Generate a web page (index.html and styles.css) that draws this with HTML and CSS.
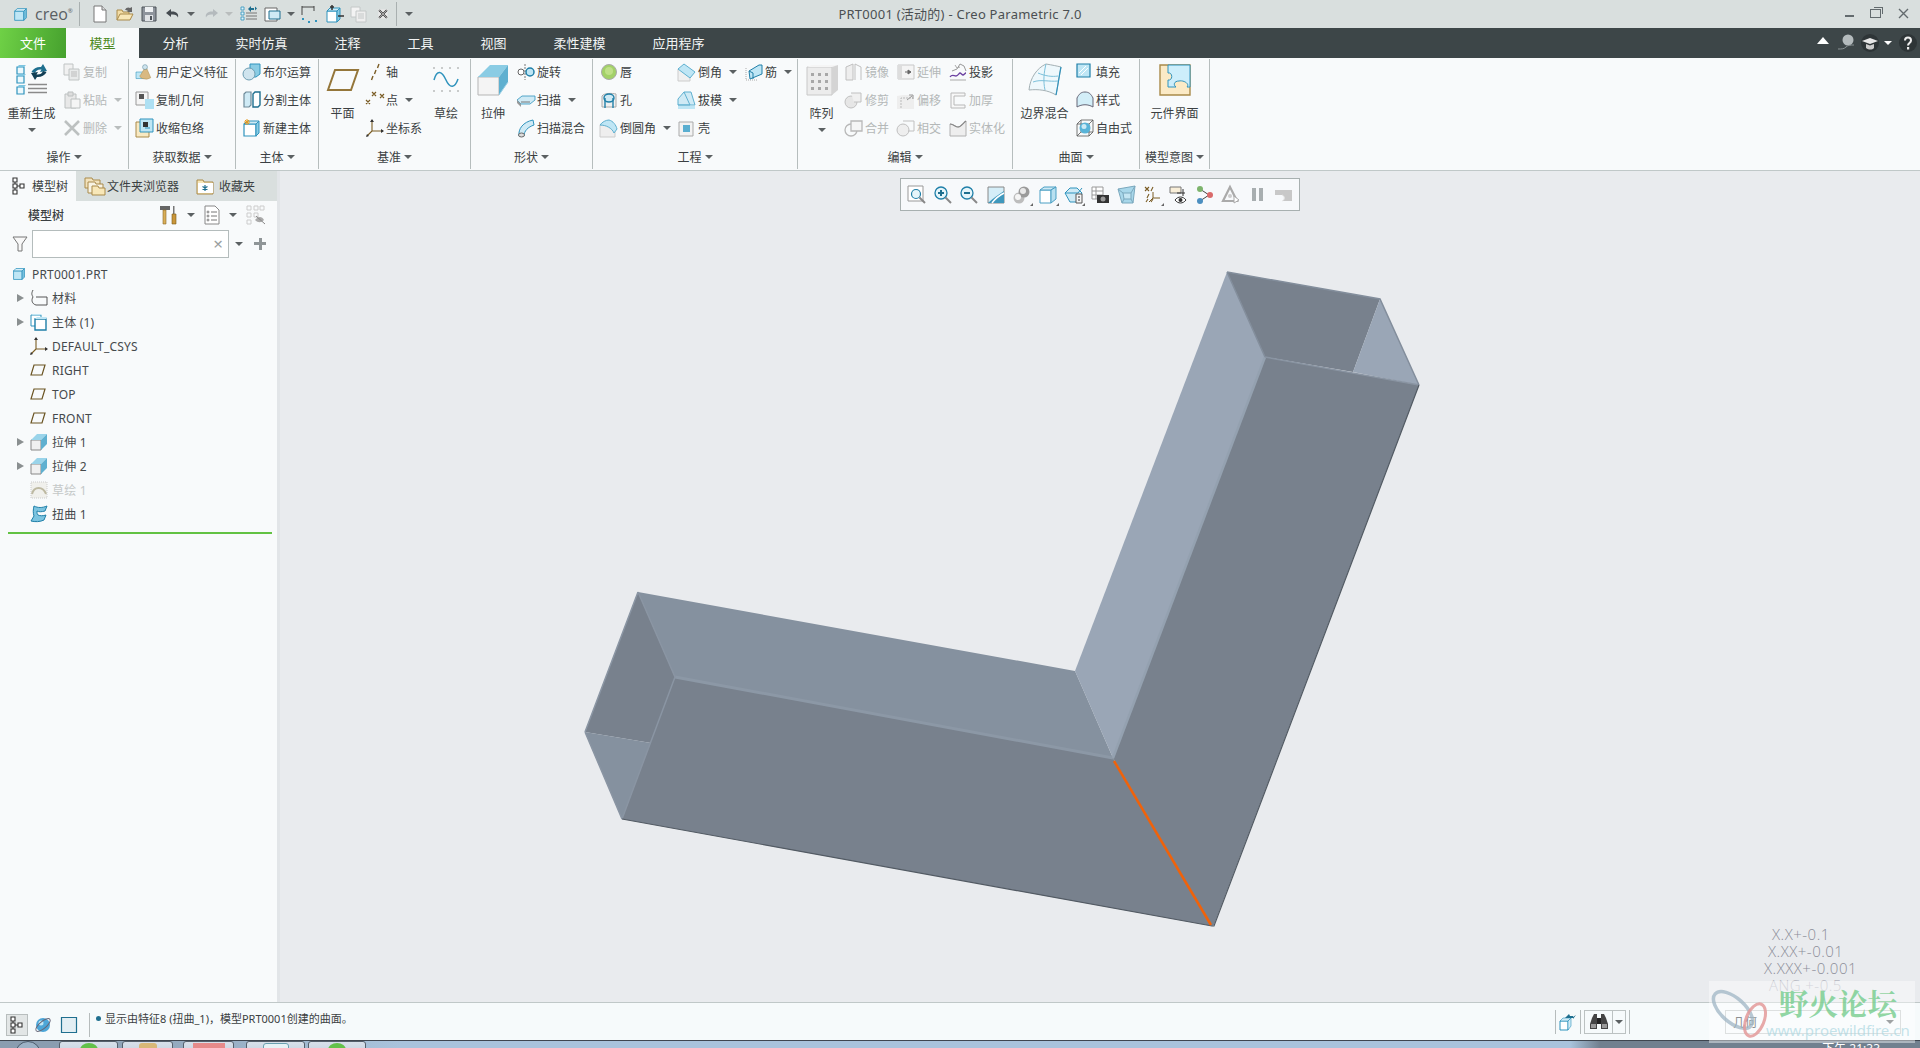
FILE: index.html
```html
<!DOCTYPE html>
<html lang="zh">
<head>
<meta charset="utf-8">
<title>PRT0001 (活动的) - Creo Parametric 7.0</title>
<link rel="stylesheet" href="styles.css">
</head>
<body>
<svg class="sprite" xmlns="http://www.w3.org/2000/svg">
<defs>
<symbol id="cube" viewBox="0 0 18 18"><path d="M2 5h11v11H2z" fill="#bfe6f5" stroke="#2f93bd"/><path d="M2 5l3-3h11l-3 3z" fill="#dff3fb" stroke="#2f93bd"/><path d="M13 5l3-3v11l-3 3z" fill="#7cc4e0" stroke="#2f93bd"/></symbol>
<symbol id="new" viewBox="0 0 18 18"><path d="M3 1h8l4 4v12H3z" fill="#fff" stroke="#777"/><path d="M11 1v4h4" fill="#ddd" stroke="#777"/></symbol>
<symbol id="open" viewBox="0 0 18 18"><path d="M1 15V5h5l1 2h6v3" fill="#f3dda6" stroke="#a98a4a"/><path d="M1 15l3-6h13l-3 6z" fill="#f8e7b8" stroke="#a98a4a"/><path d="M9 5c1-3 4-3 5-2l2-1v5h-5l1-1c-1-1-2-1-3-1z" fill="#666"/></symbol>
<symbol id="save" viewBox="0 0 18 18"><path d="M2 2h14v14H2z" fill="#8e949c" stroke="#4d5359"/><path d="M5 2h8v5H5z" fill="#eef1f3"/><path d="M5 10h8v6H5z" fill="#e0e3e6"/><path d="M10 11h2v4h-2z" fill="#4d5359"/></symbol>
<symbol id="undo" viewBox="0 0 18 18"><path d="M7 4L2 8l5 4V9.500c4-.5 6 .5 7 3 1-4-2-6.500-7-6z" fill="#454b50"/></symbol>
<symbol id="redo" viewBox="0 0 18 18"><path d="M11 4l5 4-5 4V9.500c-4-.5-6 .5-7 3-1-4 2-6.500 7-6z" fill="#b4babd"/></symbol>
<symbol id="regen-s" viewBox="0 0 18 18"><path d="M1 2h3v3H1zM1 7h3v3H1zM1 12h3v3H1z" fill="#dff3fb" stroke="#2f93bd" stroke-width=".8"/><path d="M6 8h11M6 11h11M6 14h11" stroke="#777"/><path d="M8 4l3-3v2h3v2h-3v2zM17 3.500l-2 2v-4z" fill="#1f6f8f"/></symbol>
<symbol id="window" viewBox="0 0 18 18"><path d="M1 3h12v13H1z" fill="#fff" stroke="#666"/><path d="M5 6h11v8H5z" fill="#cfeaf5" stroke="#1f6f8f"/></symbol>
<symbol id="dim" viewBox="0 0 18 18"><path d="M2 2h12M2 1v9M14 1v5" stroke="#444" fill="none"/><path d="M2 13h2v2H2zM8 16h2v2H8zM15 15h2v2h-2z" fill="#2f93bd"/></symbol>
<symbol id="addcube" viewBox="0 0 18 18"><path d="M1 6h10v11H1z" fill="#fff" stroke="#2f93bd"/><path d="M1 6l3-3h10l-3 3z" fill="#cfeaf5" stroke="#2f93bd"/><path d="M11 6l3-3v11l-3 3z" fill="#8accE4" stroke="#2f93bd"/><path d="M6 0v5M4 2h4M12 11h6" stroke="#333" stroke-width="1.500"/></symbol>
<symbol id="copy-g" viewBox="0 0 18 18"><path d="M1 2h9v10H1z" fill="#f3f3f3" stroke="#c4c8c8"/><path d="M6 6h10v11H6z" fill="#eee" stroke="#c4c8c8"/><path d="M8 9h6M8 11h6M8 13h6" stroke="#c4c8c8"/></symbol>
<symbol id="x-b" viewBox="0 0 18 18"><path d="M3 3h12v12H3z" fill="#e8e8e8"/><path d="M4 4l10 10M14 4L4 14" stroke="#333" stroke-width="2.500"/><path d="M4 4l10 10M14 4L4 14" stroke="#eee" stroke-width=".8"/></symbol>
<symbol id="regen" viewBox="0 0 32 32"><g fill="#edf8fc" stroke="#2f93bd" stroke-width="1.200"><path d="M1 3h7v7H1zM1 12h7v7H1zM1 23h7v7H1z"/></g><g fill="#7cc4e0"><path d="M1 3l2-2h7l-2 2zM1 12l2-2h7l-2 2zM1 23l2-2h7l-2 2z"/></g><path d="M12 20.500h19M12 24.500h19M12 28.500h19" stroke="#8a8a8a" stroke-width="1.500"/><path d="M15.500 8A9 7 0 0 1 25 3l2-3 4 7-7 1 1.500-2.500A6 5 0 0 0 19 9z" fill="#1f6f8f"/><path d="M30.500 8A9 7 0 0 1 21 13l-2 3-4-7 7-1-1.500 2.500A6 5 0 0 0 27 7z" fill="#123f55"/></symbol>
<symbol id="copy" viewBox="0 0 18 18"><path d="M1 1h9v11H1z" fill="#f1f1f1" stroke="#c0c4c4"/><path d="M6 6h10v11H6z" fill="#e8eaea" stroke="#c0c4c4"/><path d="M8 9h6M8 11h6M8 13h6" stroke="#bbb"/></symbol>
<symbol id="paste" viewBox="0 0 18 18"><path d="M2 3h11v14H2z" fill="#e8e8e8" stroke="#bcc0c0"/><path d="M5 1h5v4H5z" fill="#ddd" stroke="#bcc0c0"/><path d="M8 8h9v9H8z" fill="#f5f5f5" stroke="#bcc0c0"/></symbol>
<symbol id="del" viewBox="0 0 18 18"><path d="M2 2l14 14M16 2L2 16" stroke="#bcc0c0" stroke-width="2.600"/></symbol>
<symbol id="udf" viewBox="0 0 22 18"><path d="M0 9h11v8H0z" fill="#bfe6f5" stroke="#2f93bd" stroke-width=".7"/><path d="M6 12l6-10 6 14a6 3 0 0 1-12-4z" fill="#d9b982" stroke="#a98a4a" stroke-width=".6"/><circle cx="11" cy="3" r="3" fill="#cfe4ee" stroke="#4c7f96" stroke-width=".6"/></symbol>
<symbol id="copygeom" viewBox="0 0 18 18"><path d="M0 1h12v13H0z" fill="#f5f5f5" stroke="#999"/><path d="M3 3h5v5H3z" fill="#555"/><path d="M9 8h9v10H9z" fill="#aee0f3"/></symbol>
<symbol id="shrink" viewBox="0 0 18 18"><path d="M0 3h13v15H0z" fill="#f8e9c2" stroke="#a98a4a"/><path d="M4 0h13v13H4z" fill="#bfe6f5" stroke="#2f93bd"/><path d="M7 3h5v5H7z" fill="#333"/><path d="M9 9h5" stroke="#2f93bd"/></symbol>
<symbol id="bool" viewBox="0 0 18 18"><path d="M7 1l3-0h7v10l-4 3H7z" fill="#8accE4" stroke="#2f93bd"/><circle cx="6" cy="11" r="6" fill="#cfe4ee" stroke="#6e9db2"/></symbol>
<symbol id="split" viewBox="0 0 18 18"><path d="M1 3l2-2h5v13l-2 2H1z" fill="#cfeaf5" stroke="#6e8a99" stroke-width="1.200"/><path d="M10 3l2-2h5v13l-2 2h-5z" fill="#fff" stroke="#1f6f8f" stroke-width="1.400"/></symbol>
<symbol id="newbody" viewBox="0 0 18 18"><path d="M1 5h12v12H1z" fill="#fff" stroke="#2f93bd" stroke-width="1.200"/><path d="M13 5l3-3v12l-3 3z" fill="#8accE4" stroke="#2f93bd"/><path d="M1 5l3-3h12l-3 3z" fill="#cfeaf5" stroke="#2f93bd"/><path d="M4 0v6M1 3h6M2 1l4 4M6 1L2 5" stroke="#e89a1c"/></symbol>
<symbol id="plane" viewBox="0 0 32 24"><path d="M8 2h23l-7 20H1z" fill="none" stroke="#94763a" stroke-width="2"/></symbol>
<symbol id="axis" viewBox="0 0 18 18"><path d="M13 1l-1.500 4M10 7l-1.500 4M7 13l-1.500 4" stroke="#7a5c24" stroke-width="1.400"/></symbol>
<symbol id="point" viewBox="0 0 18 18"><path d="M6 1l4 4M10 1L6 5M14 3l4 4M18 3l-4 4M0 9l4 4M4 9l-4 4" stroke="#7a5c24" stroke-width="1.200"/></symbol>
<symbol id="csys" viewBox="0 0 18 18"><path d="M6 1v11h11M6 12l-5 5" fill="none" stroke="#7a5c24" stroke-width="1.100"/><path d="M6 0l2 3H4zM18 12l-3-2v4zM0 18l1-3 2 2z" fill="#333"/></symbol>
<symbol id="sketch" viewBox="0 0 32 32"><g transform="translate(3 3)"><path d="M1 13c3-11 8-9 12 0s9 8 12-1" fill="none" stroke="#2f93bd" stroke-width="1.500"/><g fill="#777"><circle cx="1" cy="1" r=".7"/><circle cx="9" cy="1" r=".7"/><circle cx="17" cy="1" r=".7"/><circle cx="25" cy="1" r=".7"/><circle cx="1" cy="24" r=".7"/><circle cx="9" cy="24" r=".7"/><circle cx="17" cy="24" r=".7"/><circle cx="25" cy="24" r=".7"/></g></g></symbol>
<symbol id="extrude" viewBox="0 0 32 32"><path d="M1 13h21v18H1z" fill="#f4f4f4" stroke="#b5b5b5"/><path d="M1 13L13 1h18L22 13z" fill="#8accE4"/><path d="M22 13L31 1v17l-9 13z" fill="#5fb0d0"/><path d="M22 31l9-13" stroke="#9ad0e6"/></symbol>
<symbol id="revolve" viewBox="0 0 18 18"><path d="M8 1v16" stroke="#777" stroke-dasharray="2 1"/><circle cx="4" cy="9" r="3" fill="#fff" stroke="#666"/><circle cx="13" cy="9" r="4" fill="#bfe6f5" stroke="#1f7fa8" stroke-width="1.500"/></symbol>
<symbol id="sweep" viewBox="0 0 18 18"><path d="M0 9l5-4h13v4l-5 4H4z" fill="#cfeaf5" stroke="#2f93bd" stroke-width=".8"/><path d="M0 9l4 4v3L0 12z" fill="#999"/><path d="M4 11h9" stroke="#777"/></symbol>
<symbol id="sblend" viewBox="0 0 18 18"><path d="M2 17C1 10 6 3 16 1l1 5C11 8 7 12 7 17z" fill="#cfeaf5" stroke="#2f93bd"/><ellipse cx="4.500" cy="16" rx="3" ry="2" fill="#ddd" stroke="#666"/></symbol>
<symbol id="lip" viewBox="0 0 18 18"><circle cx="9" cy="9" r="7.500" fill="#a3d168" stroke="#aaa"/><circle cx="9" cy="8" r="4" fill="#bfe088"/></symbol>
<symbol id="hole" viewBox="0 0 18 18"><path d="M2 5c2-3 10-3 14-2v13H2z" fill="#f0f0f0" stroke="#aaa"/><ellipse cx="9" cy="7" rx="5" ry="4" fill="#cfeaf5" stroke="#1f7fa8" stroke-width="1.400"/><path d="M5 7v10M13 7v10" stroke="#1f7fa8" stroke-width="1.400"/></symbol>
<symbol id="round" viewBox="0 0 18 18"><path d="M0 6h7c3 0 6 2 8 6v6H0z" fill="#eee" stroke="#ccc"/><path d="M0 6c2-3 6-5 9-5 4 1 7 5 8 9l-3 4C12 9 6 6 0 6z" fill="#bfe6f5" stroke="#5fb0d0"/></symbol>
<symbol id="chamfer" viewBox="0 0 18 18"><path d="M0 6h12v12H0z" fill="#f0f0f0" stroke="#ccc"/><path d="M0 6l6-5 11 8-5 6z" fill="#bfe6f5" stroke="#5fb0d0"/></symbol>
<symbol id="draft" viewBox="0 0 18 18"><path d="M0 8l6-7 7 0 4 13H0z" fill="#cfeaf5" stroke="#5fb0d0"/><path d="M6 1l6 13H0" fill="none" stroke="#5fb0d0"/><path d="M0 15h17v3H0z" fill="#bfe6f5"/></symbol>
<symbol id="shell" viewBox="0 0 18 18"><path d="M1 3h14v14H1z" fill="#f2f2f2" stroke="#aaa"/><path d="M5 6h7v7H5z" fill="#5aaed0"/></symbol>
<symbol id="rib" viewBox="0 0 18 18"><path d="M1 5l0 12 12 0" stroke="#aaa" stroke-dasharray="1 1" fill="none"/><path d="M4 8l10-6 3 0v9L5 16z" fill="#bfe6f5" stroke="#1f7fa8"/><path d="M4 8l4 2v6" stroke="#1f7fa8" fill="none"/></symbol>
<symbol id="pattern" viewBox="0 0 32 32"><path d="M1 3h25v28H1z" fill="#ececec" stroke="#c8c8c8"/><path d="M1 3l5-2h26l-6 2z" fill="#f5f5f5"/><path d="M26 3l6-2v25l-6 5z" fill="#d4d4d4"/><g fill="#a8a8a8"><path d="M5 9h3v3H5zM12 9h3v3h-3zM19 9h3v3h-3zM5 16h3v3H5zM12 16h3v3h-3zM19 16h3v3h-3zM5 23h3v3H5zM12 23h3v3h-3zM19 23h3v3h-3z"/></g></symbol>
<symbol id="mirror" viewBox="0 0 18 18"><path d="M1 4l7-3v16H1z" fill="#eee" stroke="#c0c0c0"/><path d="M10 17V1l6 3v13" fill="none" stroke="#c0c0c0"/></symbol>
<symbol id="trim" viewBox="0 0 18 18"><circle cx="6" cy="11" r="6" fill="#e6e6e6" stroke="#c0c0c0"/><path d="M6 2h10v9H9" fill="#f0f0f0" stroke="#c0c0c0"/></symbol>
<symbol id="merge" viewBox="0 0 18 18"><circle cx="6" cy="11" r="6" fill="none" stroke="#b8b8b8" stroke-width="1.300"/><path d="M6 2h11v10H6z" fill="#f5f5f5" stroke="#b8b8b8" stroke-width="1.300"/></symbol>
<symbol id="extend" viewBox="0 0 18 18"><path d="M1 2h16v14H1z" fill="#f4f4f4" stroke="#c8c8c8"/><path d="M1 2h4v14H1z" fill="#ddd"/><path d="M8 9h5M11 7l3 2-3 2z" stroke="#666" fill="#666"/></symbol>
<symbol id="offset" viewBox="0 0 18 18"><path d="M0 5l6-1h11v14H0z" fill="#eee"/><path d="M4 17V7h12" fill="none" stroke="#bbb" stroke-dasharray="2 1"/><path d="M10 9l5-4M12 4h4v4" stroke="#999" fill="none"/></symbol>
<symbol id="intersect" viewBox="0 0 18 18"><circle cx="6" cy="11" r="6" fill="#eee" stroke="#c0c0c0"/><path d="M6 2h11v10H11" fill="none" stroke="#c0c0c0"/></symbol>
<symbol id="project" viewBox="0 0 18 18"><path d="M1 14c2-3 4-1 6-1s3-3 4-3 2 2 3 2 2-2 3-2" fill="none" stroke="#6a3fa0" stroke-width="1.300"/><path d="M3 8l5-2 3-5 4 2 2 5" fill="none" stroke="#999"/><path d="M6 2l2 3 3-1M1 17h16" stroke="#aaa" fill="none"/></symbol>
<symbol id="thicken" viewBox="0 0 18 18"><path d="M2 2h14v3H5v9h11v3H2z" fill="#f8f8f8" stroke="#b8b8b8"/></symbol>
<symbol id="solidify" viewBox="0 0 18 18"><path d="M1 5c4 0 5 3 8 3s5-4 8-6v15H1z" fill="#eee" stroke="#b0b0b0"/><path d="M1 5c4 0 5 3 8 3s5-4 8-6" fill="none" stroke="#888" stroke-width="1.200"/></symbol>
<symbol id="boundary" viewBox="0 0 32 32"><path d="M0 26C1 14 8 4 17 0c6 1 11 2 15 3-2 9-3 19-5 28C19 26 9 25 0 26z" fill="#eef8fc" stroke="#a4b0b4"/><path d="M9 9c7 3 14 4 20 3M4 18c8-3 16 0 25-1" fill="none" stroke="#7cc0da"/><path d="M17 0c-2 8-3 17-1 26" fill="none" stroke="#7cc0da"/><path d="M32 3c-2 9-3 19-5 28" stroke="#2f93bd" fill="none" stroke-width="1.200"/></symbol>
<symbol id="fill" viewBox="0 0 18 18"><path d="M1 1h13v13H1z" fill="#bfe6f5" stroke="#1f7fa8" stroke-width="1.200"/><path d="M3 10l7-7M5 12l7-7" stroke="#fff"/></symbol>
<symbol id="style" viewBox="0 0 18 18"><path d="M1 16V7c2-4 4-6 8-6s6 2 8 6v9c-5-3-11-3-16 0z" fill="#d3eef8" stroke="#667"/></symbol>
<symbol id="freestyle" viewBox="0 0 18 18"><path d="M1 5h12v12H1zM5 1h12v12H5zM1 5l4-4M13 5l4-4M1 17l4-4M13 17l4-4" fill="none" stroke="#555" stroke-width=".8"/><circle cx="9" cy="9" r="5.500" fill="#59b4d8"/><circle cx="8" cy="7.500" r="2.500" fill="#cdeaf5"/></symbol>
<symbol id="iface" viewBox="0 0 32 32"><path d="M1 1h30v30H1z" fill="#fbeac6" stroke="#a98a4a" stroke-width="1.400"/><path d="M9 1h22v22h-3c3-3-3-7-8-6-5 0-6 4-3 6H9v-7c5 1 5-8 0-7z" fill="#cdeefb" stroke="#2f93bd"/></symbol>
<symbol id="v-zrect" viewBox="0 0 18 18"><path d="M0 0h15v15H0z" fill="#fff" stroke="#999"/><circle cx="8" cy="8" r="4.500" fill="#e6f5fa" stroke="#1f7fa8" stroke-width="1.200"/><path d="M11.500 11.500L17 17" stroke="#888" stroke-width="2"/></symbol>
<symbol id="v-zin" viewBox="0 0 18 18"><circle cx="7" cy="7" r="6" fill="#e6f5fa" stroke="#1f7fa8" stroke-width="1.300"/><path d="M4 7h6M7 4v6" stroke="#1f6f8f" stroke-width="2"/><path d="M11.500 11.500L17 17" stroke="#888" stroke-width="2"/></symbol>
<symbol id="v-zout" viewBox="0 0 18 18"><circle cx="7" cy="7" r="6" fill="#e6f5fa" stroke="#1f7fa8" stroke-width="1.300"/><path d="M4 7h6" stroke="#1f6f8f" stroke-width="2"/><path d="M11.500 11.500L17 17" stroke="#888" stroke-width="2"/></symbol>
<symbol id="v-refit" viewBox="0 0 18 18"><path d="M1 1h16v16H1z" fill="#d5eef8" stroke="#888"/><path d="M1 17C5 13 11 9 17 5v12z" fill="#3f98bd"/><path d="M5 17c3-4 8-8 12-10" stroke="#fff" stroke-width="1.500" fill="none"/></symbol>
<symbol id="v-shade" viewBox="0 0 18 18"><circle cx="6" cy="12" r="5.500" fill="#bdbdbd"/><circle cx="11" cy="6" r="5.500" fill="#9a9a9a"/><circle cx="10" cy="5" r="3" fill="#e8e8e8"/><circle cx="5" cy="11" r="3" fill="#f5f5f5"/><path d="M20 20h-3l3-3z" fill="#666"/></symbol>
<symbol id="v-cube" viewBox="0 0 18 18"><path d="M1 4h11v13H1z" fill="#fff" stroke="#4a9fc4"/><path d="M1 4l4-3h12l-5 3z" fill="#cfeaf5" stroke="#4a9fc4"/><path d="M12 4l5-3v12l-5 4z" fill="#b8e0f0" stroke="#4a9fc4"/><path d="M20 20h-3l3-3z" fill="#666"/></symbol>
<symbol id="v-saved" viewBox="0 0 18 18"><path d="M0 7l5-5h7l5 5-4 9H5z" fill="#cfeaf5" stroke="#2f93bd"/><path d="M0 7h13l4-5" fill="none" stroke="#2f93bd"/><path d="M11 8h6v9h-6z" fill="#f5f5f5" stroke="#555"/><path d="M13 11h2M13 14h2" stroke="#333"/><path d="M20 20h-3l3-3z" fill="#666"/></symbol>
<symbol id="v-cam" viewBox="0 0 18 18"><path d="M1 1h11v12H1zM1 5h11M1 9h11M5 1v12" fill="#fff" stroke="#999"/><path d="M6 9h12v8H6z" fill="#333"/><circle cx="12" cy="13" r="2.500" fill="#999"/></symbol>
<symbol id="v-persp" viewBox="0 0 18 18"><path d="M0 3l17-3-2 17H4z" fill="#a8d7ea" stroke="#7aa8bd"/><path d="M5 7h8v6H6zM0 3l5 4M17 0l-4 7M4 17l2-4M15 17l-2-4" fill="#c4e5f2" stroke="#7aa8bd"/></symbol>
<symbol id="v-datum" viewBox="0 0 18 18"><path d="M1 1l4 4M5 1L1 5M9 1L7 5M5 8L3 12M2 16l2-3M7 16l2-3" stroke="#7a5c24" stroke-width="1.100"/><path d="M9 6v6h7M9 12l-4 4" fill="none" stroke="#7a5c24"/><path d="M20 20h-3l3-3z" fill="#666"/></symbol>
<symbol id="v-annot" viewBox="0 0 18 18"><path d="M0 1h11v6H0z" fill="#f8eed8" stroke="#777"/><path d="M7 7h8M13 3v7" stroke="#333"/><path d="M5 14c3-4 8-4 11 0-3 4-8 4-11 0z" fill="#fff" stroke="#333"/><circle cx="10.500" cy="14" r="2" fill="#333"/></symbol>
<symbol id="v-nodes" viewBox="0 0 18 18"><path d="M4 3l9 6-9 6" fill="none" stroke="#444"/><circle cx="4" cy="3" r="3" fill="#7db46c"/><circle cx="14" cy="9" r="3" fill="#d96a6a"/><circle cx="4" cy="15" r="3" fill="#4c8fc0"/></symbol>
<symbol id="v-tri" viewBox="0 0 18 18"><path d="M8 1l7 14H1z" fill="none" stroke="#aaa" stroke-width="2.200"/><circle cx="8" cy="10" r="2" fill="#ccc"/><path d="M12 10l5 4-5 3z" fill="#fff" stroke="#aaa"/></symbol>
<symbol id="v-pause" viewBox="0 0 18 18"><path d="M3 2h4v13H3zM10 2h4v13h-4z" fill="#a8aeb0"/></symbol>
<symbol id="v-gray" viewBox="0 0 18 18"><path d="M0 4h17v11H7c3-1 3-5 0-6H0z" fill="#c8c8c8"/><path d="M7 9c3 1 3 5 0 6" stroke="#e8e8e8" fill="none"/></symbol>
<symbol id="t-tree" viewBox="0 0 16 20"><path d="M2 2h4v4H2zM2 8h4v4H2zM2 14h4v4H2zM9 8h4v4H9z" fill="#fff" stroke="#333" stroke-width="1.100"/><path d="M4 6v2M4 12v2M6 10h3" stroke="#333"/></symbol>
<symbol id="t-folder" viewBox="0 0 22 20"><path d="M1 2h7l1 2h7v8H1z" fill="#f2e2bd" stroke="#a98a4a"/><path d="M4 6h7l1 2h7v9H4z" fill="#f8f3e4" stroke="#a98a4a"/><path d="M8 10h6l1 2h6v7H8z" fill="#f8e7b8" stroke="#a98a4a"/></symbol>
<symbol id="t-fav" viewBox="0 0 18 18"><path d="M1 3h6l1 2h9v12H1z" fill="#f8e7b8" stroke="#a98a4a"/><path d="M2 6h15v10H2z" fill="#fff"/><path d="M9 8v6M6.500 9.500l5 3M11.500 9.500l-5 3" stroke="#1f6f8f" stroke-width="1.200"/></symbol>
<symbol id="t-hammer" viewBox="0 0 18 20"><path d="M0 1l10 0 0 4H0z" fill="#666"/><path d="M3 5h3v14H3z" fill="#d9ae58" stroke="#8a6a2a" stroke-width=".6"/><path d="M13 1h1.500v8H13z" fill="#777"/><path d="M12 9h4v10h-4z" fill="#c9963a" stroke="#7a5a1a" stroke-width=".6"/></symbol>
<symbol id="t-list" viewBox="0 0 16 20"><path d="M1 1h10l4 4v14H1z" fill="#fff" stroke="#888"/><path d="M7 7h6M7 11h6M7 15h6" stroke="#777"/><circle cx="4" cy="7" r="1" fill="none" stroke="#555" stroke-width=".7"/><circle cx="4" cy="11" r="1" fill="none" stroke="#555" stroke-width=".7"/><circle cx="4" cy="15" r="1" fill="none" stroke="#555" stroke-width=".7"/></symbol>
<symbol id="t-eye" viewBox="0 0 20 20"><path d="M1 1h4v4H1zM1 8h4v4H1zM1 15h4v4H1zM8 8h4v4H8zM8 1h4v4H8zM14 1h4v4h-4z" fill="none" stroke="#ccc"/><path d="M9 15c3-4 7-4 9 0-3 3-6 3-9 0z" fill="#aaa"/><path d="M10 11l9 8" stroke="#888"/></symbol>
<symbol id="t-funnel" viewBox="0 0 16 16"><path d="M1 1h14l-5 7v7H6V8z" fill="#f8f8f8" stroke="#777"/></symbol>
<symbol id="t-plane" viewBox="0 0 16 12"><path d="M4 1h11l-3 10H1z" fill="none" stroke="#6b5423" stroke-width="1.200"/></symbol>
<symbol id="t-mat" viewBox="0 0 18 18"><path d="M3 1C1 5 2 6 3 8c-2 3-1 7 3 8h11v-8H6" fill="none" stroke="#444" stroke-width=".9"/></symbol>
<symbol id="t-body" viewBox="0 0 18 18"><path d="M1 2h10v11H1z" fill="#fff" stroke="#2f93bd"/><path d="M5 6h11v11H5z" fill="#fff" stroke="#1f7fa8" stroke-width="1.400"/><path d="M1 2l2-1h9l-1 1zM5 6l2-2h10l-1 2z" fill="#bfe6f5"/></symbol>
<symbol id="t-ext" viewBox="0 0 18 18"><path d="M1 7h10v10H1z" fill="#f0f0f0" stroke="#888"/><path d="M1 7l6-6h10l-6 6z" fill="#9ad4ea"/><path d="M11 7l6-6v10l-6 6z" fill="#5fb0d0"/></symbol>
<symbol id="t-sk" viewBox="0 0 18 18"><path d="M1 1h16v16H1z" fill="#f0f0ec" stroke="#ccc" stroke-dasharray="1 1"/><path d="M2 13c2-8 11-8 14 0" fill="none" stroke="#bdb9a2" stroke-width="2"/></symbol>
<symbol id="t-twist" viewBox="0 0 18 18"><path d="M4 1c4 2 8 2 13 0l-2 5c-4 1-6 1-8 0 0 2 0 3 1 4 2 1 5 1 8 0l-2 5c-4 2-9 2-13 1l3-5c-1-3-1-6 0-10z" fill="#7cc4e0" stroke="#1f7fa8"/></symbol>
<symbol id="s-globe" viewBox="0 0 18 18"><circle cx="9" cy="9" r="7" fill="#4ca6d8"/><circle cx="7" cy="7" r="2.500" fill="#bfe6f5"/><ellipse cx="9" cy="9" rx="9" ry="3.500" fill="none" stroke="#667" transform="rotate(-40 9 9)"/></symbol>
<symbol id="s-square" viewBox="0 0 18 18"><path d="M1.500 1.500h15v15h-15z" fill="#e2eef3" stroke="#1f6f8f" stroke-width="1.200"/></symbol>
<symbol id="s-cubearrow" viewBox="0 0 18 18"><path d="M1 8h8v9H1z" fill="#fff" stroke="#2f93bd"/><path d="M1 8l3-3h8L9 8zM9 8l3-3v8l-3 4z" fill="#cfeaf5" stroke="#2f93bd" stroke-width=".6"/><path d="M6 5l4-4 1 2h3v2h-3zM17 2l-3 4 0-2z" fill="#1f6f8f"/></symbol>
<symbol id="s-bino" viewBox="0 0 18 18"><path d="M2 5l2-4h3v15H0v-5zM16 5l-2-4h-3v15h7v-5z" fill="#444"/><path d="M7 5h4v6H7z" fill="#222"/><path d="M1 11h5v4H1zM12 11h5v4h-5z" fill="#999"/></symbol>
<symbol id="w-search" viewBox="0 0 18 18"><circle cx="10" cy="6" r="5.500" fill="#b4bbbd"/><path d="M0 15c4 0 6 0 8-2s5-2 8-2" fill="none" stroke="#8a9294"/></symbol>
<symbol id="w-hat" viewBox="0 0 18 18"><circle cx="9" cy="9" r="9" fill="#2e3537"/><path d="M1 7l8-3 8 3-8 3z" fill="#e8e8e8"/><path d="M5 10v4c3 2 6 2 8 0v-4l-4 1.500z" fill="#ccc"/></symbol>
<symbol id="w-help" viewBox="0 0 18 18"><circle cx="9" cy="9" r="9" fill="#2e3537"/><path d="M6 6.500c0-4 6-4 6 0 0 2.500-3 2.500-3 5" fill="none" stroke="#eee" stroke-width="2"/><path d="M8 13h2.200v2.500H8z" fill="#eee"/></symbol>
</defs>
</svg>

<div class="app">
  <header class="titlebar">
    <div class="qat">
      <svg class="i15 logo-cube"><use href="#cube"/></svg>
      <span class="wordmark">creo<sup>®</sup></span>
      <i class="vsep s-a"></i>
      <svg class="i18 q-new"><use href="#new"/></svg>
      <svg class="i18 q-a"><use href="#open"/></svg>
      <svg class="i18 q-a"><use href="#save"/></svg>
      <svg class="i18 q-a"><use href="#undo"/></svg>
      <i class="caret q-caret"></i>
      <svg class="i18 q-c"><use href="#redo"/></svg>
      <i class="caret off q-caret"></i>
      <svg class="i18 q-c"><use href="#regen-s"/></svg>
      <svg class="i18 q-b"><use href="#window"/></svg>
      <i class="caret q-caret"></i>
      <svg class="i18 q-f"><use href="#dim"/></svg>
      <svg class="i18 q-g"><use href="#addcube"/></svg>
      <svg class="i18 q-b"><use href="#copy-g"/></svg>
      <svg class="i14 q-d"><use href="#x-b"/></svg>
      <i class="vsep s-b"></i>
      <i class="caret q-e"></i>
    </div>
    <div class="title">PRT0001 (活动的) - Creo Parametric 7.0</div>
    <div class="winctl">
      <i class="w-min"></i>
      <i class="w-max"></i>
      <svg class="w-close" viewBox="0 0 10 10"><path d="M0 0l10 10M10 0L0 10" stroke="#636b6e" stroke-width="1.500"/></svg>
    </div>
  </header>

  <nav class="tabs">
    <a class="tab file">文件</a>
    <a class="tab active">模型</a>
    <a class="tab">分析</a>
    <a class="tab">实时仿真</a>
    <a class="tab">注释</a>
    <a class="tab">工具</a>
    <a class="tab">视图</a>
    <a class="tab">柔性建模</a>
    <a class="tab">应用程序</a>
    <div class="tab-tools">
      <svg class="up" viewBox="0 0 12 7"><path d="M0 7l6-7 6 7z" fill="#fff"/></svg>
      <svg class="ti"><use href="#w-search"/></svg>
      <svg class="ti"><use href="#w-hat"/></svg>
      <i class="caret white"></i>
      <svg class="ti"><use href="#w-help"/></svg>
    </div>
  </nav>

  <section class="ribbon">
    <div class="group g129">
      <div class="body">
        <div class="big w63"><svg class="i32"><use href="#regen"/></svg><span>重新生成</span><i class="caret"></i></div>
        <div class="col">
          <div class="row off"><svg class="i18"><use href="#copy"/></svg>复制</div>
          <div class="row off"><svg class="i18"><use href="#paste"/></svg>粘贴<i class="caret off"></i></div>
          <div class="row off"><svg class="i18"><use href="#del"/></svg>删除<i class="caret off"></i></div>
        </div>
      </div>
      <div class="glabel">操作<i class="caret"></i></div>
    </div>
    <div class="group g107">
      <div class="body pad7">
        <div class="col">
          <div class="row"><svg class="i18"><use href="#udf"/></svg>用户定义特征</div>
          <div class="row"><svg class="i18"><use href="#copygeom"/></svg>复制几何</div>
          <div class="row"><svg class="i18"><use href="#shrink"/></svg>收缩包络</div>
        </div>
      </div>
      <div class="glabel">获取数据<i class="caret"></i></div>
    </div>
    <div class="group g83">
      <div class="body pad7">
        <div class="col">
          <div class="row"><svg class="i18"><use href="#bool"/></svg>布尔运算</div>
          <div class="row"><svg class="i18"><use href="#split"/></svg>分割主体</div>
          <div class="row"><svg class="i18"><use href="#newbody"/></svg>新建主体</div>
        </div>
      </div>
      <div class="glabel">主体<i class="caret"></i></div>
    </div>
    <div class="group g152">
      <div class="body">
        <div class="big w47"><svg class="i32"><use href="#plane"/></svg><span>平面</span></div>
        <div class="col w57">
          <div class="row"><svg class="i18"><use href="#axis"/></svg>轴</div>
          <div class="row"><svg class="i18"><use href="#point"/></svg>点<i class="caret"></i></div>
          <div class="row"><svg class="i18"><use href="#csys"/></svg>坐标系</div>
        </div>
        <div class="big w46"><svg class="i32"><use href="#sketch"/></svg><span>草绘</span></div>
      </div>
      <div class="glabel">基准<i class="caret"></i></div>
    </div>
    <div class="group g122">
      <div class="body">
        <div class="big w46 nudge"><svg class="i32"><use href="#extrude"/></svg><span>拉伸</span></div>
        <div class="col">
          <div class="row"><svg class="i18"><use href="#revolve"/></svg>旋转</div>
          <div class="row"><svg class="i18"><use href="#sweep"/></svg>扫描<i class="caret"></i></div>
          <div class="row"><svg class="i18"><use href="#sblend"/></svg>扫描混合</div>
        </div>
      </div>
      <div class="glabel">形状<i class="caret"></i></div>
    </div>
    <div class="group g205">
      <div class="body pad7">
        <div class="col w78">
          <div class="row"><svg class="i18"><use href="#lip"/></svg>唇</div>
          <div class="row"><svg class="i18"><use href="#hole"/></svg>孔</div>
          <div class="row"><svg class="i18"><use href="#round"/></svg>倒圆角<i class="caret"></i></div>
        </div>
        <div class="col w67">
          <div class="row"><svg class="i18"><use href="#chamfer"/></svg>倒角<i class="caret"></i></div>
          <div class="row"><svg class="i18"><use href="#draft"/></svg>拔模<i class="caret"></i></div>
          <div class="row"><svg class="i18"><use href="#shell"/></svg>壳</div>
        </div>
        <div class="col">
          <div class="row"><svg class="i18"><use href="#rib"/></svg>筋<i class="caret"></i></div>
        </div>
      </div>
      <div class="glabel">工程<i class="caret"></i></div>
    </div>
    <div class="group g215">
      <div class="body">
        <div class="big w47 off"><svg class="i32"><use href="#pattern"/></svg><span>阵列</span><i class="caret"></i></div>
        <div class="col w52">
          <div class="row off"><svg class="i18"><use href="#mirror"/></svg>镜像</div>
          <div class="row off"><svg class="i18"><use href="#trim"/></svg>修剪</div>
          <div class="row off"><svg class="i18"><use href="#merge"/></svg>合并</div>
        </div>
        <div class="col w52">
          <div class="row off"><svg class="i18"><use href="#extend"/></svg>延伸</div>
          <div class="row off"><svg class="i18"><use href="#offset"/></svg>偏移</div>
          <div class="row off"><svg class="i18"><use href="#intersect"/></svg>相交</div>
        </div>
        <div class="col">
          <div class="row"><svg class="i18"><use href="#project"/></svg>投影</div>
          <div class="row off"><svg class="i18"><use href="#thicken"/></svg>加厚</div>
          <div class="row off"><svg class="i18"><use href="#solidify"/></svg>实体化</div>
        </div>
      </div>
      <div class="glabel">编辑<i class="caret"></i></div>
    </div>
    <div class="group g127">
      <div class="body">
        <div class="big w63"><svg class="i32"><use href="#boundary"/></svg><span>边界混合</span></div>
        <div class="col">
          <div class="row"><svg class="i18"><use href="#fill"/></svg>填充</div>
          <div class="row"><svg class="i18"><use href="#style"/></svg>样式</div>
          <div class="row"><svg class="i18"><use href="#freestyle"/></svg>自由式</div>
        </div>
      </div>
      <div class="glabel">曲面<i class="caret"></i></div>
    </div>
    <div class="group g70">
      <div class="body">
        <div class="big w69"><svg class="i32"><use href="#iface"/></svg><span>元件界面</span></div>
      </div>
      <div class="glabel">模型意图<i class="caret"></i></div>
    </div>
  </section>

  <main class="work">
    <aside class="panel">
      <div class="ptabs">
        <div class="ptab cur"><svg class="i16-20"><use href="#t-tree"/></svg>模型树</div>
        <div class="ptab t2"><svg class="i22"><use href="#t-folder"/></svg>文件夹浏览器</div>
        <div class="ptab t3"><svg class="i18"><use href="#t-fav"/></svg>收藏夹</div>
      </div>
      <div class="ptools">
        <strong class="ptitle">模型树</strong>
        <svg class="i18-20"><use href="#t-hammer"/></svg><i class="caret"></i>
        <svg class="i16-20"><use href="#t-list"/></svg><i class="caret"></i>
        <svg class="i20"><use href="#t-eye"/></svg>
      </div>
      <div class="pfilter">
        <svg class="i16"><use href="#t-funnel"/></svg>
        <div class="search"><span class="clear">×</span></div>
        <i class="caret"></i>
        <span class="plus"></span>
      </div>
      <ul class="tree">
        <li class="node root"><svg class="i14"><use href="#cube"/></svg>PRT0001.PRT</li>
        <li class="node"><i class="arrow"></i><svg class="i18"><use href="#t-mat"/></svg>材料</li>
        <li class="node"><i class="arrow"></i><svg class="i18"><use href="#t-body"/></svg>主体 (1)</li>
        <li class="node"><i class="arrow none"></i><svg class="i18"><use href="#csys"/></svg>DEFAULT_CSYS</li>
        <li class="node"><i class="arrow none"></i><svg class="i18 pl"><use href="#t-plane"/></svg>RIGHT</li>
        <li class="node"><i class="arrow none"></i><svg class="i18 pl"><use href="#t-plane"/></svg>TOP</li>
        <li class="node"><i class="arrow none"></i><svg class="i18 pl"><use href="#t-plane"/></svg>FRONT</li>
        <li class="node"><i class="arrow"></i><svg class="i18"><use href="#t-ext"/></svg>拉伸 1</li>
        <li class="node"><i class="arrow"></i><svg class="i18"><use href="#t-ext"/></svg>拉伸 2</li>
        <li class="node dim-node"><i class="arrow none"></i><svg class="i18"><use href="#t-sk"/></svg>草绘 1</li>
        <li class="node"><i class="arrow none"></i><svg class="i18"><use href="#t-twist"/></svg>扭曲 1</li>
      </ul>
      <div class="insert"></div>
    </aside>
    <div class="canvas">
      <svg class="model" viewBox="280 171 1640 831" xmlns="http://www.w3.org/2000/svg">
        <polygon points="638,592 675,677 651,743 585,732" fill="#78818d"/>
        <polygon points="585,732 651,743 622,819" fill="#85919f"/>
        <polygon points="638,592 1075,671 1113,758 675,677" fill="#85919f"/>
        <polygon points="1227,272 1265,357 1113,758 1075,671" fill="#9aa6b6"/>
        <polygon points="1227,272 1380,299 1353,372 1265,357" fill="#78818d"/>
        <polygon points="1380,299 1419,385 1353,372" fill="#9aa6b6"/>
        <polygon points="675,677 1113,758 1212,926 622,819" fill="#78818d"/>
        <polygon points="1113,758 1265,357 1419,385 1214,925 1212,926" fill="#78818d"/>
        <g fill="none" stroke-width="1.500">
          <path d="M675 677L1113 758" stroke="#8c98a6" stroke-width="3"/>
          <path d="M1113 758L1265 357" stroke="#94a1b0" stroke-width="2.500"/>
          <path d="M1265 357L1419 385" stroke="#8994a2"/>
          <path d="M675 677L622 819M638 592L675 677M585 732L622 819M638 592L585 732" stroke="#8a95a3"/>
          <path d="M1227 272L1265 357M1227 272L1380 299L1419 385" stroke="#838e9c"/>
          <path d="M622 819L1212 926L1214 926L1419 385" stroke="#525a63" stroke-width="1.200"/>
        </g>
        <path d="M1114 761L1211 925" stroke="#f0620a" stroke-width="2.500" fill="none"/>
      </svg>

      <div class="viewbar">
        <svg class="i18"><use href="#v-zrect"/></svg>
        <svg class="i18"><use href="#v-zin"/></svg>
        <svg class="i18"><use href="#v-zout"/></svg>
        <svg class="i18"><use href="#v-refit"/></svg>
        <svg class="i18"><use href="#v-shade"/></svg>
        <svg class="i18"><use href="#v-cube"/></svg>
        <svg class="i18"><use href="#v-saved"/></svg>
        <svg class="i18"><use href="#v-cam"/></svg>
        <svg class="i18"><use href="#v-persp"/></svg>
        <svg class="i18"><use href="#v-datum"/></svg>
        <svg class="i18"><use href="#v-annot"/></svg>
        <svg class="i18"><use href="#v-nodes"/></svg>
        <svg class="i18"><use href="#v-tri"/></svg>
        <svg class="i18"><use href="#v-pause"/></svg>
        <svg class="i18"><use href="#v-gray"/></svg>
      </div>
      <div class="tols">
        <div class="t1">X.X+-0.1</div>
        <div class="t2">X.XX+-0.01</div>
        <div class="t3">X.XXX+-0.001</div>
        <div class="t4">ANG.+-0.5</div>
      </div>
    </div>
  </main>

  <footer class="status">
    <div class="sbtn"><svg class="i16-20"><use href="#t-tree"/></svg></div>
    <svg class="i18 s-g"><use href="#s-globe"/></svg>
    <svg class="i18 s-q"><use href="#s-square"/></svg>
    <i class="svline l1"></i>
    <div class="msg"><i class="bullet"></i>显示由特征8 (扭曲_1)，模型PRT0001创建的曲面。</div>
    <div class="sright">
      <i class="svline"></i>
      <svg class="i18"><use href="#s-cubearrow"/></svg>
      <i class="svline"></i>
      <div class="finder"><span class="fi"><svg class="i18"><use href="#s-bino"/></svg></span><span class="fc"><i class="caret"></i></span></div>
      <i class="svline"></i>
      <div class="combo"><span>几何</span><i class="caret"></i></div>
    </div>
  </footer>

  <div class="taskbar">
    <i class="orb"></i>
    <div class="tk k1"><i class="tk-ic green"></i></div>
    <div class="tk k2"><i class="tk-ic tan"></i></div>
    <div class="tk k3"><i class="tk-ic red"></i></div>
    <div class="tk k4"><i class="tk-ic box"></i></div>
    <div class="tk k5"><i class="tk-ic green"></i></div>
    <span class="clock">下午 21:33</span>
  </div>

  <div class="watermark">
    <svg class="wm-logo" viewBox="0 0 60 54"><ellipse cx="24" cy="26" rx="24" ry="12" transform="rotate(42 24 26)" fill="none" stroke="#9fb6c4" stroke-opacity=".75" stroke-width="3.500"/><ellipse cx="46" cy="36" rx="9" ry="17" transform="rotate(22 46 36)" fill="none" stroke="#e39a9a" stroke-opacity=".85" stroke-width="3"/></svg>
    <div class="wm-cn">野火论坛</div>
    <div class="wm-en">www.proewildfire.cn</div>
  </div>
</div>
</body>
</html>
```
FILE: styles.css
```css
* { box-sizing: border-box; }
html, body { margin: 0; height: 100%; overflow: hidden; }
body {
  font-family: "Noto Sans", "Noto Sans CJK SC", "Open Sans", sans-serif;
  font-size: 12px;
  color: #3b3f42;
  background: #e9ebee;
}
.sprite { position: absolute; width: 0; height: 0; }
symbol { overflow: visible; }
svg { display: block; flex: none; overflow: visible; }
i { display: block; flex: none; }

.i14 { width: 14px; height: 14px; }
.i15 { width: 15px; height: 15px; }
.i16 { width: 16px; height: 16px; }
.i18 { width: 18px; height: 18px; }
.i20 { width: 20px; height: 20px; }
.i22 { width: 22px; height: 20px; }
.i32 { width: 32px; height: 32px; }
.i16-20 { width: 16px; height: 20px; }
.i18-20 { width: 18px; height: 20px; }

.caret {
  width: 0; height: 0;
  border-left: 4px solid transparent;
  border-right: 4px solid transparent;
  border-top: 4px solid #5b6062;
}
.caret.off { border-top-color: #b9bdbd; }
.caret.white { border-top-color: #fff; }

.app { display: flex; flex-direction: column; height: 1048px; position: relative; overflow: hidden; }

/* title bar */
.titlebar { flex: 0 0 28px; display: flex; align-items: center; background: #d9dfde; position: relative; }
.qat { display: flex; align-items: center; padding-left: 13px; }
.wordmark { font-family: "Open Sans", sans-serif; font-size: 16px; color: #5a6064; margin-left: 7px; width: 44px; line-height: 20px; }
.wordmark sup { font-size: 6px; vertical-align: 7px; line-height: 0; }
.vsep { width: 1px; height: 24px; background: #a9b0b0; }
.s-a { margin-right: 11px; }
.q-new { margin-right: 1px; }
.q-a { margin-left: 6px; }
.q-b { margin-left: 6px; }
.q-c { margin-left: 7px; }
.q-f { margin-left: 5px; }
.q-g { margin-left: 8px; }
.q-caret { margin-left: 5px; }
.q-d { margin-left: 8px; margin-right: 3px; }
.s-b { margin-left: 3px; }
.q-e { margin-left: 8px; }
.title { position: absolute; left: 0; right: 0; top: 0; text-align: center; line-height: 28px; font-size: 13px; letter-spacing: .25px; color: #4b4f52; }
.winctl { margin-left: auto; display: flex; align-items: center; padding-right: 12px; position: relative; }
.w-min { width: 9px; height: 2px; background: #636b6e; margin-top: 4px; margin-right: 16px; }
.w-max { width: 11px; height: 9px; border: 1.500px solid #636b6e; margin-right: 18px; margin-top: -2px; box-shadow: 2px -2px 0 -1px #d9dfde, 3px -3px 0 -1px #636b6e; }
.w-close { width: 9px; height: 9px; margin-top: -2px; }

/* tabs */
.tabs { flex: 0 0 30px; display: flex; background: #3d4648; }
.tab { padding: 0 23.500px; line-height: 30px; font-size: 13px; color: #f2f4f4; }
.tab.file { width: 66px; padding: 0; text-align: center; color: #fff; background: linear-gradient(100deg, #6fd146, #46a12e); }
.tab.active { background: #f8fafb; color: #4d8a22; }
.tab-tools { margin-left: auto; display: flex; align-items: center; padding-right: 3px; }
.tab-tools .up { width: 12px; height: 7px; margin-right: 9px; margin-top: -6px; }
.tab-tools .ti { width: 18px; height: 18px; }
.tab-tools .ti + .ti { margin-left: 5px; }
.tab-tools .caret { margin: 0 7px 0 5px; }

/* ribbon */
.ribbon { flex: 0 0 113px; display: flex; background: #f8fafb; border-bottom: 1px solid #c0c8c8; }
.group {
  display: flex; flex-direction: column; height: 112px;
  border-right: 1px solid #b6bdbd;
  border-image: linear-gradient(transparent 2px, #b6bdbd 2px, #b6bdbd 110px, transparent 110px) 1;
}
.g129 { width: 129px; } .g107 { width: 107px; } .g83 { width: 83px; } .g152 { width: 152px; }
.g122 { width: 122px; } .g205 { width: 205px; } .g215 { width: 215px; } .g127 { width: 127px; } .g70 { width: 70px; }
.body { flex: 0 0 85px; display: flex; }
.pad7 { padding-left: 7px; }
.glabel { flex: 1; display: flex; align-items: center; justify-content: center; gap: 3px; }
.col { display: flex; flex-direction: column; }
.row { display: flex; align-items: center; gap: 2px; height: 28px; white-space: nowrap; }
.row .caret { margin-left: 5px; }
.off { color: #b4b8b8; }
.big { display: flex; flex-direction: column; align-items: center; padding-top: 6px; white-space: nowrap; }
.big.nudge { padding-right: 2px; }
.big span { margin-top: 9px; line-height: 18px; color: #3b3f42; }
.big.off span { color: #3b3f42; }
.big .caret { margin-top: 5px; }
.w46 { width: 46px; } .w47 { width: 47px; } .w52 { width: 52px; } .w57 { width: 57px; }
.w63 { width: 63px; } .w67 { width: 67px; } .w69 { width: 69px; } .w78 { width: 78px; }

/* main */
.work { flex: 1; display: flex; min-height: 0; }
.panel { flex: 0 0 280px; background: #f8fafb; border-right: 3px solid #e2e5e8; display: flex; flex-direction: column; }
.ptabs { flex: 0 0 30px; display: flex; background: #d9dfde; }
.ptab { display: flex; align-items: center; white-space: nowrap; }
.ptab.cur { width: 76px; background: #f8fafb; padding-left: 11px; gap: 5px; }
.ptab.t2 { padding-left: 8px; gap: 1px; width: 112px; }
.ptab.t3 { padding-left: 8px; gap: 5px; }
.ptools { flex: 0 0 28px; display: flex; align-items: center; padding-left: 28px; }
.ptitle { font-weight: 500; width: 132px; }
.ptools .caret { margin: 0 9px 0 9px; }
.pfilter { flex: 0 0 29px; display: flex; align-items: center; padding-left: 12px; }
.search { width: 197px; height: 28px; margin-left: 4px; background: #fff; border: 1px solid #b4bcbc; text-align: right; padding-right: 5px; }
.clear { font-size: 17px; line-height: 26px; color: #9aa0a0; }
.pfilter .caret { margin-left: 6px; }
.plus { width: 12px; height: 12px; margin-left: 11px; background: linear-gradient(#8f9597, #8f9597) center/12px 3px no-repeat, linear-gradient(#8f9597, #8f9597) center/3px 12px no-repeat; }
.tree { list-style: none; margin: 0; padding: 4px 0 0; }
.node { display: flex; align-items: center; height: 24px; padding-left: 17px; font-size: 12px; letter-spacing: .2px; color: #45494c; white-space: nowrap; }
.node.root { padding-left: 12px; gap: 6px; }
.node svg { margin: 0 4px 0 6px; }
.node.root svg { margin: 0; }
.node svg.pl { width: 16px; height: 12px; margin-right: 6px; }
.arrow { width: 0; height: 0; border-left: 7px solid #8a8f90; border-top: 4.500px solid transparent; border-bottom: 4.500px solid transparent; }
.arrow.none { width: 7px; border: 0; }
.dim-node { color: #c4c8c8; }
.insert { height: 2px; margin: 6px 5px 0 8px; background: #62c243; }

/* canvas */
.canvas { flex: 1; position: relative; background: #e9ebee; overflow: hidden; }
.model { width: 1640px; height: 831px; }
.viewbar { position: absolute; left: 620px; top: 7px; width: 400px; height: 33px; display: flex; align-items: center; justify-content: space-between; padding: 0 6px 0 7px; background: #f7f9fb; border: 1px solid #a8b0b0; }
.tols { position: absolute; left: 1484px; top: 755px; font-family: "Open Sans", sans-serif; font-weight: 300; font-size: 15px; letter-spacing: .5px; line-height: 17px; color: #8c8e99; white-space: nowrap; }
.tols .t1 { margin-left: 8px; }
.tols .t2 { margin-left: 4px; }
.tols .t4 { margin-left: 5px; color: #b4b6bf; }

/* status */
.status { flex: 0 0 38px; display: flex; align-items: center; background: #f6fafb; border-top: 1px solid #c0c8c8; padding-left: 6px; }
.sbtn { width: 22px; height: 22px; margin-top: 6px; background: #e2e6e6; border: 1px solid #b8bebe; display: flex; align-items: center; justify-content: center; }
.s-g { margin: 6px 0 0 6px; }
.s-q { margin: 6px 0 0 8px; }
.svline { width: 1px; height: 24px; background: #b6bcbc; }
.l1 { margin: 6px 0 0 11px; }
.msg { display: flex; align-items: center; align-self: flex-start; height: 30px; margin-left: 6px; font-size: 11px; white-space: nowrap; }
.bullet { width: 5px; height: 5px; border-radius: 50%; background: #1f6f8f; margin-right: 4px; }
.sright { margin-left: auto; display: flex; align-items: center; gap: 3px; padding-right: 19px; width: 365px; }
.finder { display: flex; width: 42px; height: 24px; border: 1px solid #bcc2c2; }
.fi { width: 27px; display: flex; align-items: center; justify-content: center; }
.fc { flex: 1; border-left: 1px solid #bcc2c2; display: flex; align-items: center; justify-content: center; }
.combo { margin-left: auto; width: 176px; height: 24px; border: 1px solid #c4caca; display: flex; align-items: center; justify-content: space-between; padding: 0 6px 0 7px; }

/* taskbar */
.taskbar { flex: 0 0 8px; display: flex; overflow: hidden; position: relative; border-top: 1px solid #3f4650; background: linear-gradient(90deg, #8a9db0 0, #8a9db0 60px, #a9c3dc 400px, #a9c3dc 1570px, #71808f 1600px, #71808f 100%); }
.orb { width: 26px; height: 26px; border-radius: 50%; background: #9db2c6; border: 1px solid #4a5a6a; margin: 0 0 0 15px; }
.tk { height: 20px; border: 1px solid #55606c; border-radius: 3px 3px 0 0; background: linear-gradient(#d8e0ea, #bccbdc); display: flex; justify-content: center; }
.k1 { width: 59px; margin-left: 18px; } .k2 { width: 51px; margin-left: 4px; } .k3 { width: 51px; margin-left: 10px; }
.k4 { width: 59px; margin-left: 12px; } .k5 { width: 58px; margin-left: 3px; }
.tk-ic { width: 18px; height: 14px; margin-top: 1px; border-radius: 3px 3px 0 0; }
.green { background: #63c14a; border-radius: 50% 50% 0 0; }
.tan { background: #d8b878; }
.red { background: #e68a8a; width: 32px; border-radius: 0; }
.box { background: #e6f2f6; border: 1px solid #6aa0b0; width: 26px; }
.clock { margin-left: auto; margin-right: 40px; font-size: 12px; line-height: 14px; color: #fff; margin-top: 1px; }

/* watermark overlay */
.watermark { position: absolute; left: 1709px; top: 981px; width: 206px; height: 62px; background: rgba(255, 255, 255, .42); }
.wm-logo { position: absolute; left: 0; top: 3px; width: 60px; height: 54px; }
.wm-cn { position: absolute; left: 70px; top: 3px; font-family: "Noto Serif CJK SC", "Noto Sans CJK SC", serif; font-weight: 700; font-size: 29.500px; line-height: 36px; color: rgba(104, 200, 130, .72); white-space: nowrap; }
.wm-en { position: absolute; left: 57px; top: 39px; font-size: 15px; line-height: 20px; color: rgba(170, 215, 225, .7); white-space: nowrap; }
```
